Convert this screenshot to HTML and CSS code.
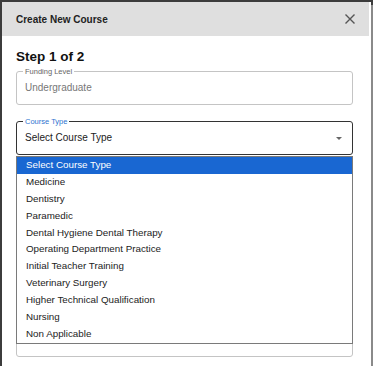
FILE: index.html
```html
<!DOCTYPE html>
<html>
  <head>
    <link rel="stylesheet" href="styles.css">
  </head>

  <body>
    <div class="modal">
      <div class="modal-header">
        <span class="modal-title">Create New Course</span>
        <svg class="close" width="10" height="10" viewBox="0 0 10 10">
          <path d="M0.5 0.5 L9.5 9.5 M9.5 0.5 L0.5 9.5" stroke="#555" stroke-width="1.4" fill="none"/>
        </svg>
      </div>

      <div class="modal-body">
        <h2 class="step">Step 1 of 2</h2>

        <div class="field">
          <span class="field-label">Funding Level</span>
          <div class="field-value muted">Undergraduate</div>
        </div>

        <div class="field focused">
          <span class="field-label">Course Type</span>
          <div class="field-value">Select Course Type</div>
          <span class="arrow"></span>

          <ul class="options">
            <li class="selected">Select Course Type</li>
            <li>Medicine</li>
            <li>Dentistry</li>
            <li>Paramedic</li>
            <li>Dental Hygiene Dental Therapy</li>
            <li>Operating Department Practice</li>
            <li>Initial Teacher Training</li>
            <li>Veterinary Surgery</li>
            <li>Higher Technical Qualification</li>
            <li>Nursing</li>
            <li>Non Applicable</li>
          </ul>
        </div>

        <!-- fields hidden behind the open list -->
        <div class="field"></div>
        <div class="field"></div>
        <div class="field multiline"></div>
      </div>
    </div>
    <div class="scrollbar"></div>
  </body>
</html>
```

FILE: styles.css
```css
body {
  margin: 0;
  height: 366px;
  display: flex;
  background-color: #3c3c3c;
  font-family: "Liberation Sans", Arial, sans-serif;
  overflow: hidden;
}

.modal {
  margin: 2px 0 0 2px;
  width: 369px;
  height: 364px;
  background-color: #fff;
  overflow: hidden;
}

.modal-header {
  box-sizing: border-box;
  width: 367px;
  height: 34px;
  padding: 0 14px;
  display: flex;
  align-items: center;
  justify-content: space-between;
  background-color: #dfdfdf;
}

.modal-title {
  font-size: 10px;
  font-weight: bold;
  color: #222;
}

.close {
  display: block;
}

.modal-body {
  padding: 13px 18px 0 14px;
}

.step {
  margin: 0 0 6px;
  font-size: 13.5px;
  line-height: 16px;
  font-weight: bold;
  color: #111;
}

.field {
  position: relative;
  box-sizing: border-box;
  height: 34px;
  margin-bottom: 16px;
  border: 1px solid #c4c4c4;
  border-radius: 3px;
}

.field.focused {
  border-color: #333;
}

.field.multiline {
  height: 86px;
}

.field-label {
  position: absolute;
  top: -5px;
  left: 6px;
  padding: 0 2px;
  background-color: #fff;
  font-size: 7.5px;
  line-height: 9px;
  color: #666;
}

.focused .field-label {
  color: #2f74d0;
}

.field-value {
  padding-left: 8px;
  font-size: 10px;
  line-height: 32px;
  color: #222;
}

.field-value.muted {
  color: #777;
}

.arrow {
  position: absolute;
  right: 10px;
  top: 15px;
  border-left: 3px solid transparent;
  border-right: 3px solid transparent;
  border-top: 3px solid #666;
}

.options {
  position: absolute;
  top: 34px;
  left: -1px;
  right: -1px;
  z-index: 2;
  margin: 0;
  padding: 0;
  list-style: none;
  background-color: #fff;
  border: 1px solid #7a7a7a;
}

.options li {
  height: 16.9px;
  padding-left: 9px;
  font-size: 9.8px;
  line-height: 16.9px;
  color: #222;
}

.options li.selected {
  background-color: #1967d2;
  color: #fff;
}

.scrollbar {
  width: 2px;
  margin-top: 5px;
  background-color: #8a8a8a;
}
```
